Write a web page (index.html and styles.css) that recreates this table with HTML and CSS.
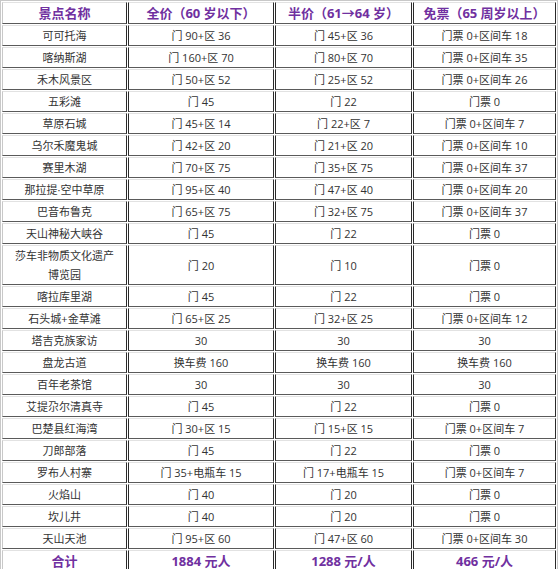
FILE: index.html
```html
<!DOCTYPE html>
<html lang="zh-CN">
<head>
<meta charset="utf-8">
<title>景点门票</title>
<link rel="stylesheet" href="styles.css">
</head>
<body>
<table class="fees">
  <colgroup>
    <col class="c1"><col class="c2"><col class="c3"><col class="c4">
  </colgroup>
  <thead>
    <tr><th>景点名称</th><th>全价（60 岁以下）</th><th>半价（61→64 岁）</th><th>免票（65 周岁以上）</th></tr>
  </thead>
  <tbody>
    <tr><td>可可托海</td><td>门 90+区 36</td><td>门 45+区 36</td><td>门票 0+区间车 18</td></tr>
    <tr><td>喀纳斯湖</td><td>门 160+区 70</td><td>门 80+区 70</td><td>门票 0+区间车 35</td></tr>
    <tr><td>禾木风景区</td><td>门 50+区 52</td><td>门 25+区 52</td><td>门票 0+区间车 26</td></tr>
    <tr><td>五彩滩</td><td>门 45</td><td>门 22</td><td>门票 0</td></tr>
    <tr><td>草原石城</td><td>门 45+区 14</td><td>门 22+区 7</td><td>门票 0+区间车 7</td></tr>
    <tr><td>乌尔禾魔鬼城</td><td>门 42+区 20</td><td>门 21+区 20</td><td>门票 0+区间车 10</td></tr>
    <tr><td>赛里木湖</td><td>门 70+区 75</td><td>门 35+区 75</td><td>门票 0+区间车 37</td></tr>
    <tr><td>那拉提·空中草原</td><td>门 95+区 40</td><td>门 47+区 40</td><td>门票 0+区间车 20</td></tr>
    <tr><td>巴音布鲁克</td><td>门 65+区 75</td><td>门 32+区 75</td><td>门票 0+区间车 37</td></tr>
    <tr><td>天山神秘大峡谷</td><td>门 45</td><td>门 22</td><td>门票 0</td></tr>
    <tr class="tall"><td>莎车非物质文化遗产<br>博览园</td><td>门 20</td><td>门 10</td><td>门票 0</td></tr>
    <tr><td>喀拉库里湖</td><td>门 45</td><td>门 22</td><td>门票 0</td></tr>
    <tr><td>石头城+金草滩</td><td>门 65+区 25</td><td>门 32+区 25</td><td>门票 0+区间车 12</td></tr>
    <tr><td>塔吉克族家访</td><td>30</td><td>30</td><td>30</td></tr>
    <tr><td>盘龙古道</td><td>换车费 160</td><td>换车费 160</td><td>换车费 160</td></tr>
    <tr><td>百年老茶馆</td><td>30</td><td>30</td><td>30</td></tr>
    <tr><td>艾提尕尔清真寺</td><td>门 45</td><td>门 22</td><td>门票 0</td></tr>
    <tr><td>巴楚县红海湾</td><td>门 30+区 15</td><td>门 15+区 15</td><td>门票 0+区间车 7</td></tr>
    <tr><td>刀郎部落</td><td>门 45</td><td>门 22</td><td>门票 0</td></tr>
    <tr><td>罗布人村寨</td><td>门 35+电瓶车 15</td><td>门 17+电瓶车 15</td><td>门票 0+区间车 7</td></tr>
    <tr><td>火焰山</td><td>门 40</td><td>门 20</td><td>门票 0</td></tr>
    <tr><td>坎儿井</td><td>门 40</td><td>门 20</td><td>门票 0</td></tr>
    <tr><td>天山天池</td><td>门 95+区 60</td><td>门 47+区 60</td><td>门票 0+区间车 30</td></tr>
  </tbody>
  <tfoot>
    <tr><th>合计</th><th>1884 元人</th><th>1288 元/人</th><th>466 元/人</th></tr>
  </tfoot>
</table>
</body>
</html>
```

FILE: styles.css
```css
html, body {
  margin: 0;
  padding: 0;
  background: #fff;
}

.fees {
  width: 558px;
  table-layout: fixed;
  border-collapse: separate;
  border-spacing: 1px;
  border: 1px solid #c8c8c8;
  font-family: "Open Sans", "Noto Sans CJK SC", sans-serif;
  font-size: 11px;
  color: #333;
}

.c1 { width: 125px; }
.c2 { width: 146px; }
.c3 { width: 137px; }
.c4 { width: 143px; }

.fees th,
.fees td {
  box-sizing: border-box;
  padding: 0;
  text-align: center;
  vertical-align: middle;
  border-style: solid;
  border-width: 1px;
  border-color: #e2e2e2 #2a2a2a #5a5a5a #2a2a2a;
}

.fees td {
  height: 21px;
  line-height: 19px;
  font-weight: normal;
}

.fees tr.tall td {
  height: 40px;
}

.fees th {
  height: 22px;
  line-height: 20px;
  font-size: 13px;
  font-weight: bold;
  color: #7030a0;
}

.fees th:first-child,
.fees td:first-child {
  border-left-color: #c8c8c8;
}
```
